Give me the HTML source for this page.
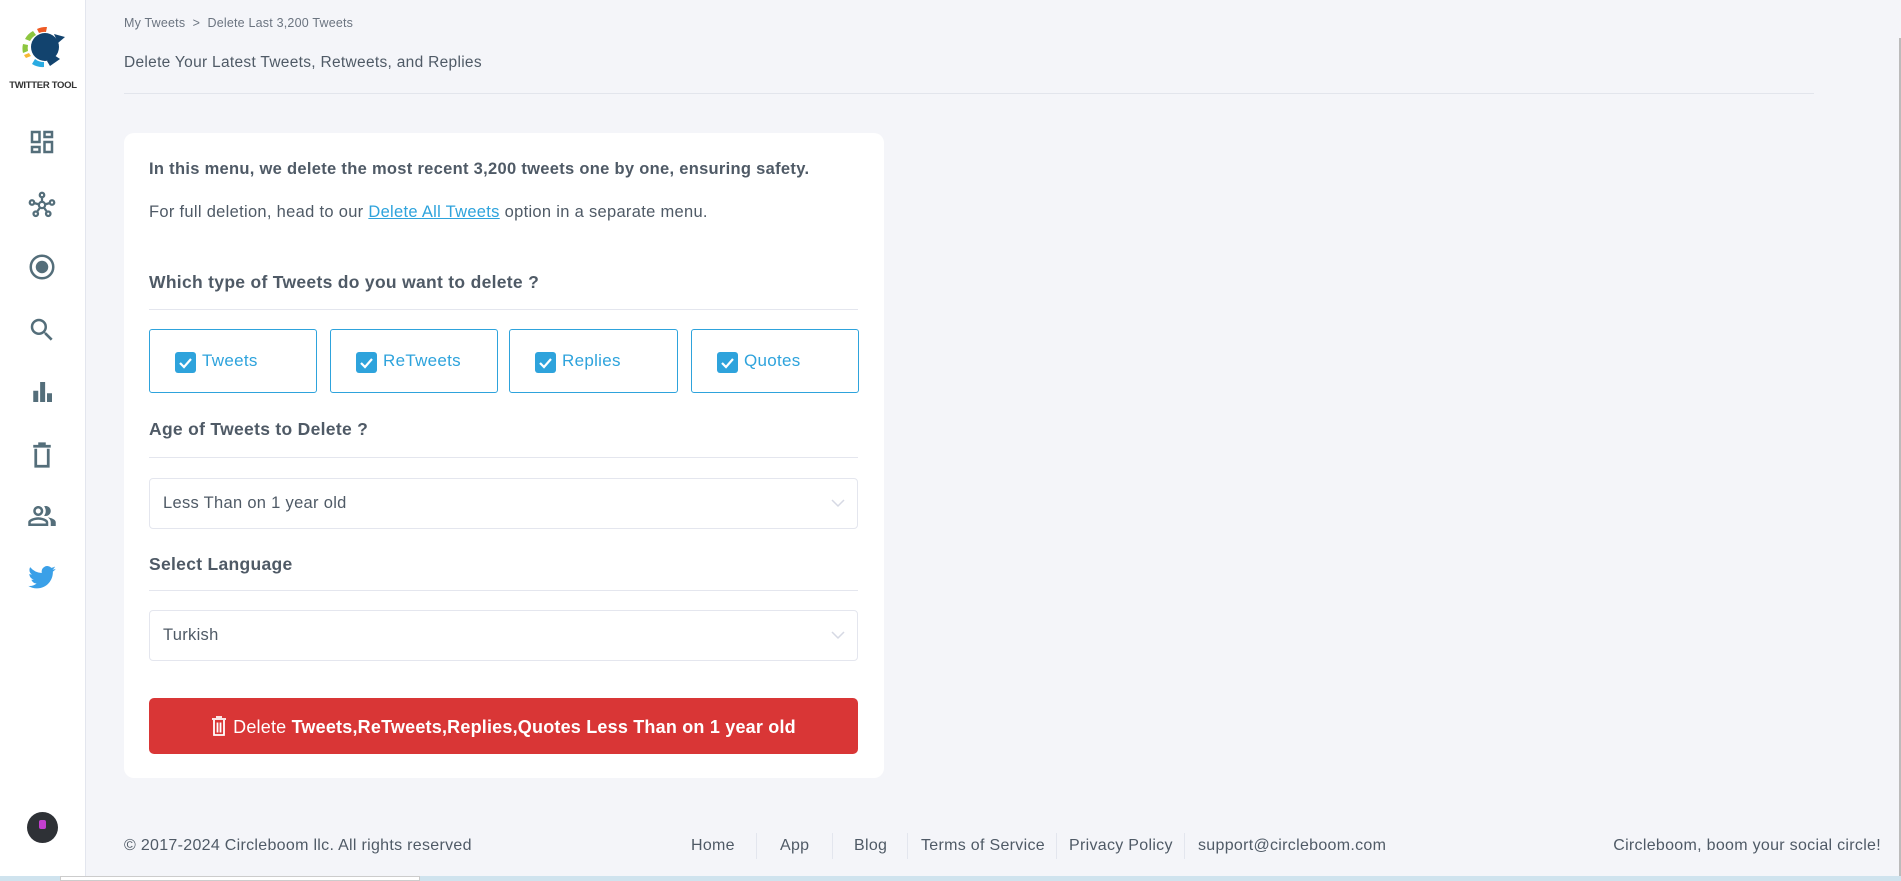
<!DOCTYPE html>
<html><head><meta charset="utf-8"><style>
*{box-sizing:border-box;margin:0;padding:0}
body{width:1901px;height:881px;overflow:hidden;background:#f4f5f9;font-family:"Liberation Sans",sans-serif;color:#4f5a66;position:relative}
.side{position:absolute;left:0;top:0;width:86px;height:881px;background:#fff;border-right:1px solid #e3e6ee}
.ic{position:absolute;left:27px;width:30px;height:30px}
.bc{position:absolute;left:124px;top:16px;font-size:12.5px;color:#6b7480;letter-spacing:.2px}
.tt{position:absolute;left:124px;top:54px;font-size:15.5px;color:#4f5a66;letter-spacing:.3px}
.hr{position:absolute;left:124px;top:93px;width:1690px;height:1px;background:#e2e5ec}
.card{position:absolute;left:124px;top:133px;width:760px;height:645px;background:#fff;border-radius:10px}
.abs{position:absolute}
.h{font-size:17.5px;font-weight:bold;color:#4f5a66;letter-spacing:.3px}
.line{position:absolute;left:25px;width:709px;height:1px;background:#e4e6ee}
.cb{position:absolute;top:196px;height:64px;border:1px solid #2ea3dc;border-radius:3px;color:#2ea3dc;font-size:17px;letter-spacing:.3px}
.cb span.box{position:absolute;left:25px;top:22px;width:21px;height:21px;background:#2ea3dc;border-radius:3px}
.cb span.t{position:absolute;left:52px;top:21px}
.sel{position:absolute;left:25px;width:709px;height:51px;border:1px solid #e4e6ee;border-radius:4px;font-size:16.5px;color:#4f5a66;padding:15px 0 0 13px;letter-spacing:.3px}
.sel svg{position:absolute;right:12px;top:20px}
.btn{position:absolute;left:25px;top:565px;width:709px;height:56px;background:#d93636;border-radius:5px;color:#fff;font-size:18px;text-align:center;padding-top:18px;letter-spacing:.2px}
.ft{position:absolute;top:837px;font-size:16px;color:#4f5a66;letter-spacing:.3px}
.sep{position:absolute;top:833px;width:1px;height:26px;background:#e3e6ee}
</style></head><body>
<div class="side">
<svg class="abs" style="left:18px;top:24px" width="50" height="48" viewBox="0 0 50 48">
<circle cx="27" cy="23" r="14" fill="#12436e"/><path d="M36 10 L47 13 L40 19Z" fill="#12436e"/>
<path d="M19 5 A19 19 0 0 1 29 3 L28 8 A14 14 0 0 0 21 9Z" fill="#ee5a24"/>
<path d="M7 15 A19 19 0 0 1 15 7 L18 11 A14 14 0 0 0 12 17Z" fill="#8dc63f"/>
<path d="M5 29 A19 19 0 0 1 5 20 L10 21 A14 14 0 0 0 10 27Z" fill="#8dc63f"/>
<path d="M8 34 A19 19 0 0 1 6 31 L11 29 A14 14 0 0 0 13 32Z" fill="#f7b733"/>
<path d="M14 40 A19 19 0 0 0 26 43 L26 38 A14 14 0 0 1 17 35Z" fill="#29abe2"/>
<path d="M32 42 L42 35 L36 31 L29 37Z" fill="#12436e"/>
</svg>
<div class="abs" style="left:0;width:86px;top:80px;text-align:center;font-size:9.5px;font-weight:bold;color:#333;letter-spacing:-.3px">TWITTER TOOL</div>
<svg class="ic" style="top:127px" viewBox="0 0 24 24" fill="#546e7a"><path d="M3 13h8V3H3v10zm2-8h4v6H5V5zm8 16h8V11h-8v10zm2-8h4v6h-4v-6zM13 3v6h8V3h-8zm6 4h-4V5h4v2zM3 21h8v-6H3v6zm2-4h4v2H5v-2z"/></svg>
<svg class="ic" style="top:190px" viewBox="0 0 24 24" fill="none" stroke="#546e7a" stroke-width="1.8"><circle cx="12" cy="12" r="2.5"/><circle cx="12" cy="4" r="1.8"/><circle cx="4" cy="10" r="1.8"/><circle cx="20" cy="10" r="1.8"/><circle cx="7" cy="19" r="1.8"/><circle cx="17" cy="19" r="1.8"/><path d="M12 6v3.5M6 10.5l3.5 1M18 10.5l-3.5 1M8 17.5l2.5-3.5M16 17.5l-2.5-3.5"/></svg>
<svg class="ic" style="top:252px" viewBox="0 0 24 24"><circle cx="12" cy="12" r="9" fill="none" stroke="#546e7a" stroke-width="2"/><circle cx="12" cy="12" r="5" fill="#546e7a"/></svg>
<svg class="ic" style="top:315px" viewBox="0 0 24 24" fill="#546e7a"><path d="M15.5 14h-.79l-.28-.27A6.47 6.47 0 0 0 16 9.5 6.5 6.5 0 1 0 9.5 16c1.61 0 3.09-.59 4.23-1.57l.27.28v.79l5 4.99L20.49 19l-4.99-5zm-6 0C7.01 14 5 11.99 5 9.5S7.01 5 9.5 5 14 7.01 14 9.5 11.990 14 9.5 14z"/></svg>
<svg class="ic" style="top:377px" viewBox="0 0 24 24" fill="#546e7a"><path d="M5 11h4v9H5zM10.5 4h4v16h-4zM16 13h4v7h-4z"/></svg>
<svg class="ic" style="top:440px" viewBox="0 0 24 24" fill="none" stroke="#546e7a" stroke-width="2.2"><path d="M5 5h14M9 3h6M7 7v14h10V7"/></svg>
<svg class="ic" style="top:501px" viewBox="0 0 24 24" fill="#546e7a"><path d="M16.67 13.13C18.04 14.06 19 15.32 19 17v3h4v-3c0-2.18-3.570-3.47-6.33-3.87zM15 12c2.21 0 4-1.79 4-4s-1.79-4-4-4c-.47 0-.91.1-1.33.24a5.98 5.98 0 0 1 0 7.52c.42.14.86.24 1.33.24zM9 12c2.21 0 4-1.79 4-4S11.21 4 9 4 5 5.79 5 8s1.79 4 4 4zm0-6c1.1 0 2 .9 2 2s-.9 2-2 2-2-.9-2-2 .9-2 2-2zm0 7c-2.67 0-8 1.34-8 4v3h16v-3c0-2.66-5.33-4-8-4zm6 5H3v-.99C3.2 16.29 6.3 15 9 15s5.8 1.29 6 2v1z"/></svg>
<svg class="ic" style="top:563px" viewBox="0 0 24 24" fill="#3aa0e8"><path d="M23 4.6c-.8.4-1.7.6-2.6.7.9-.6 1.6-1.4 2-2.5-.9.5-1.9.9-2.9 1.1A4.5 4.5 0 0 0 11.8 8 12.8 12.8 0 0 1 2.5 3.3a4.5 4.5 0 0 0 1.4 6 4.5 4.5 0 0 1-2-.6v.1c0 2.2 1.6 4 3.6 4.4a4.5 4.5 0 0 1-2 .1c.6 1.8 2.2 3.1 4.2 3.1A9 9 0 0 1 1 18.3 12.8 12.8 0 0 0 7.9 20.3c8.3 0 12.8-6.9 12.8-12.8v-.6c.9-.6 1.7-1.4 2.3-2.3z"/></svg>
<div class="abs" style="left:27px;top:812px;width:31px;height:31px;border-radius:50%;background:#2e3136"><div style="position:absolute;left:12px;top:8px;width:7px;height:9px;background:#c43fd0;border-radius:2px"></div></div>
</div>
<div class="bc">My Tweets &nbsp;&gt;&nbsp; Delete Last 3,200 Tweets</div>
<div class="tt">Delete Your Latest Tweets, Retweets, and Replies</div>
<div class="hr"></div>
<div class="card">
<div class="abs" style="left:25px;top:27px;font-size:16.5px;font-weight:bold;color:#4f5a66;letter-spacing:.3px">In this menu, we delete the most recent 3,200 tweets one by one, ensuring safety.</div>
<div class="abs" style="left:25px;top:70px;font-size:16.5px;color:#4f5a66;letter-spacing:.3px">For full deletion, head to our <span style="color:#2ea3dc;text-decoration:underline">Delete All Tweets</span> option in a separate menu.</div>
<div class="abs h" style="left:25px;top:139px">Which type of Tweets do you want to delete ?</div>
<div class="line" style="top:176px"></div>
<div class="cb" style="left:25px;width:168px"><span class="box"><svg width="21" height="21" viewBox="0 0 21 21"><path d="M5 11l4 4 7-8" stroke="#fff" stroke-width="2.2" fill="none"/></svg></span><span class="t">Tweets</span></div>
<div class="cb" style="left:206px;width:168px"><span class="box"><svg width="21" height="21" viewBox="0 0 21 21"><path d="M5 11l4 4 7-8" stroke="#fff" stroke-width="2.2" fill="none"/></svg></span><span class="t">ReTweets</span></div>
<div class="cb" style="left:385px;width:169px"><span class="box"><svg width="21" height="21" viewBox="0 0 21 21"><path d="M5 11l4 4 7-8" stroke="#fff" stroke-width="2.2" fill="none"/></svg></span><span class="t">Replies</span></div>
<div class="cb" style="left:567px;width:168px"><span class="box"><svg width="21" height="21" viewBox="0 0 21 21"><path d="M5 11l4 4 7-8" stroke="#fff" stroke-width="2.2" fill="none"/></svg></span><span class="t">Quotes</span></div>
<div class="abs h" style="left:25px;top:286px">Age of Tweets to Delete ?</div>
<div class="line" style="top:324px"></div>
<div class="sel" style="top:345px">Less Than on 1 year old<svg width="14" height="9" viewBox="0 0 14 9"><path d="M1 1l6 6 6-6" stroke="#d6d9e4" stroke-width="1.5" fill="none"/></svg></div>
<div class="abs h" style="left:25px;top:421px">Select Language</div>
<div class="line" style="top:457px"></div>
<div class="sel" style="top:477px">Turkish<svg width="14" height="9" viewBox="0 0 14 9"><path d="M1 1l6 6 6-6" stroke="#d6d9e4" stroke-width="1.5" fill="none"/></svg></div>
<div class="btn"><svg width="16" height="20" viewBox="0 0 16 20" style="vertical-align:-3px;margin-right:6px"><path d="M1 3h14M5 1h6M3 4v15h10V4M6.5 6.5v10M9.5 6.5v10" stroke="#fff" stroke-width="1.8" fill="none"/></svg>Delete <b>Tweets,ReTweets,Replies,Quotes Less Than on 1 year old</b></div>
</div>
<div class="ft" style="left:124px">© 2017-2024 Circleboom llc. All rights reserved</div>
<div class="ft" style="left:691px">Home</div><div class="sep" style="left:756px"></div>
<div class="ft" style="left:780px">App</div><div class="sep" style="left:832px"></div>
<div class="ft" style="left:854px">Blog</div><div class="sep" style="left:907px"></div>
<div class="ft" style="left:921px">Terms of Service</div><div class="sep" style="left:1056px"></div>
<div class="ft" style="left:1069px">Privacy Policy</div><div class="sep" style="left:1184px"></div>
<div class="ft" style="left:1198px">support@circleboom.com</div>
<div class="ft" style="right:20px">Circleboom, boom your social circle!</div>
<div class="abs" style="left:1899px;top:38px;width:2px;height:843px;background:#bbb"></div>
<div class="abs" style="left:0;top:876px;width:1901px;height:5px;background:#cfe3ee"></div>
<div class="abs" style="left:60px;top:876px;width:360px;height:5px;background:#fff;border:1px solid #ccc"></div>
</body></html>
